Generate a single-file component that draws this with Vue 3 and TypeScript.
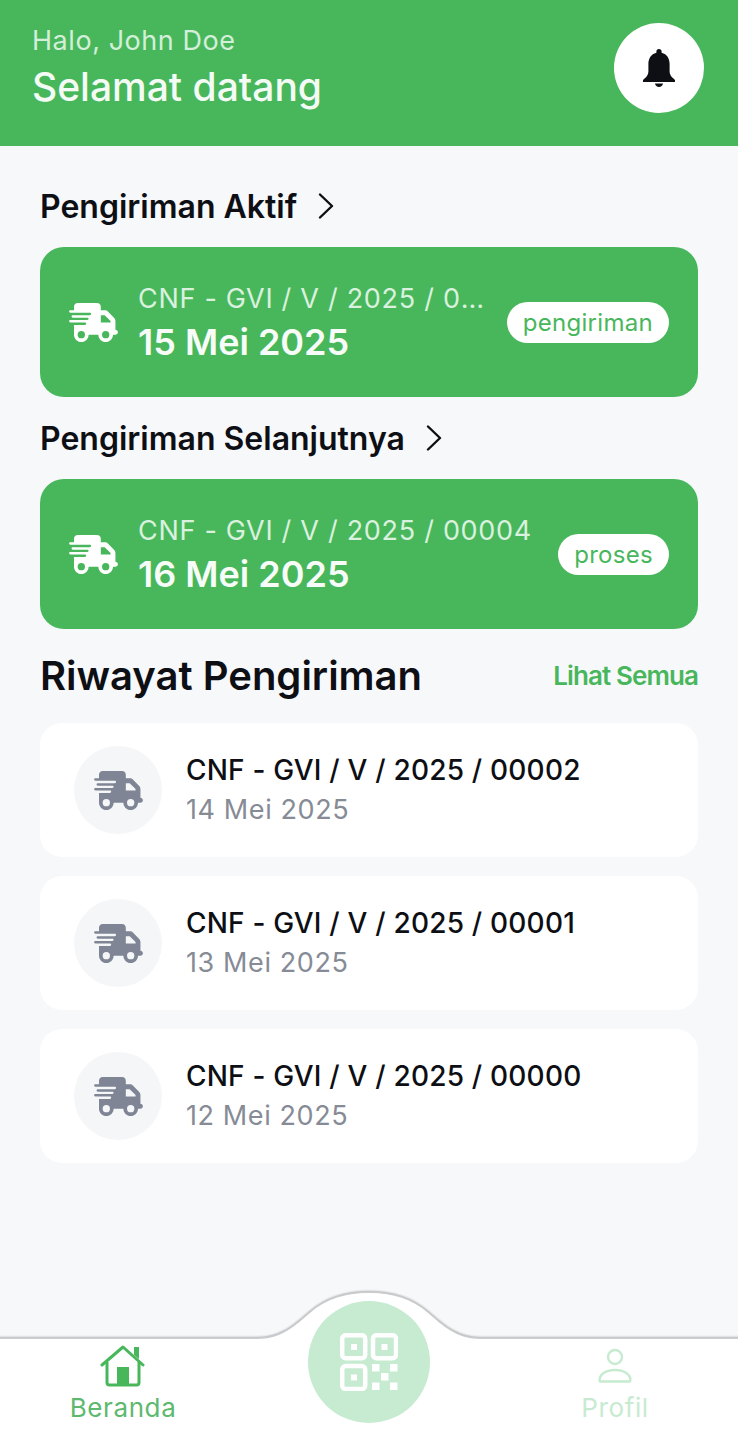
<script setup lang="ts">
interface Shipment {
  code: string;
  date: string;
  status?: string;
}

const TRUCK_PATH =
  "M112 0C85.5 0 64 21.5 64 48V96H16c-8.8 0-16 7.2-16 16s7.2 16 16 16H64 272c8.8 0 16 7.2 16 16s-7.2 16-16 16H64 48c-8.8 0-16 7.2-16 16s7.2 16 16 16H64 240c8.8 0 16 7.2 16 16s-7.2 16-16 16H64 16c-8.8 0-16 7.2-16 16s7.2 16 16 16H64 208c8.8 0 16 7.2 16 16s-7.2 16-16 16H64V416c0 53 43 96 96 96s96-43 96-96H384c0 53 43 96 96 96s96-43 96-96h32c17.7 0 32-14.3 32-32s-14.3-32-32-32V288 256 237.3c0-17-6.7-33.3-18.7-45.3L512 114.7c-12-12-28.3-18.7-45.3-18.7H416V48c0-26.5-21.5-48-48-48H112zM544 237.3V256H416V160h50.7L544 237.3zM160 368a48 48 0 1 1 0 96 48 48 0 1 1 0-96zm272 48a48 48 0 1 1 96 0 48 48 0 1 1-96 0z";

const BUMP_EDGE =
  "M-10 52H258C282 52 296 38 310 26C326 12 345 6 369 6C393 6 412 12 428 26C442 38 456 52 480 52H748";

const sections: { title: string; item: Shipment }[] = [
  {
    title: "Pengiriman Aktif",
    item: { code: "CNF - GVI / V / 2025 / 00005", date: "15 Mei 2025", status: "pengiriman" },
  },
  {
    title: "Pengiriman Selanjutnya",
    item: { code: "CNF - GVI / V / 2025 / 00004", date: "16 Mei 2025", status: "proses" },
  },
];

const history: Shipment[] = [
  { code: "CNF - GVI / V / 2025 / 00002", date: "14 Mei 2025" },
  { code: "CNF - GVI / V / 2025 / 00001", date: "13 Mei 2025" },
  { code: "CNF - GVI / V / 2025 / 00000", date: "12 Mei 2025" },
];
</script>

<template>
  <div class="page">
    <header class="header">
      <div class="greeting">
        <div class="hello">Halo, John Doe</div>
        <div class="welcome">Selamat datang</div>
      </div>
      <div class="bell">
        <svg width="32" height="38" viewBox="0 0 32 38">
          <path
            fill="#0d0f14"
            d="M16 0c-1.6 0-2.6 1-2.6 2.6v1.1C8 5 5.4 9.5 5.4 15v7.5c0 3-1.5 5-3.6 6.8L0 31v2h32v-2l-1.8-1.7c-2.1-1.8-3.6-3.8-3.6-6.8V15c0-5.5-2.6-10-8-11.3V2.600C18.600 1 17.600 0 16 0zM12 34.500h8c-.3 2-2 3.500-4 3.500s-3.700-1.500-4-3.500z"
          />
        </svg>
      </div>
    </header>

    <main class="content">
      <section v-for="s in sections" :key="s.title" class="active">
        <div class="section-title">
          <span>{{ s.title }}</span>
          <svg width="18" height="26" viewBox="0 0 18 26" fill="none">
            <path d="M3 1.5 15 13 3 24.5" stroke="#0d0f14" stroke-width="2.4" stroke-linecap="round" stroke-linejoin="round" />
          </svg>
        </div>
        <div class="card">
          <svg class="card-truck" width="49" height="39" viewBox="0 0 640 512">
            <path fill="#fff" :d="TRUCK_PATH" />
          </svg>
          <div class="card-text">
            <div class="card-code">{{ s.item.code }}</div>
            <div class="card-date">{{ s.item.date }}</div>
          </div>
          <span class="pill">{{ s.item.status }}</span>
        </div>
      </section>

      <div class="history-head">
        <h2>Riwayat Pengiriman</h2>
        <span class="see-all">Lihat Semua</span>
      </div>
      <div class="history">
        <div v-for="h in history" :key="h.code" class="row">
          <div class="row-icon">
            <svg width="49" height="39" viewBox="0 0 640 512">
              <path fill="#7f8595" :d="TRUCK_PATH" />
            </svg>
          </div>
          <div>
            <div class="row-code">{{ h.code }}</div>
            <div class="row-date">{{ h.date }}</div>
          </div>
        </div>
      </div>
    </main>

    <nav class="nav">
      <svg class="nav-bump" width="738" height="60" viewBox="0 0 738 60">
        <path :d="BUMP_EDGE + 'V60H-10Z'" fill="#fff" />
        <path :d="BUMP_EDGE" fill="none" stroke="#3c4048" stroke-opacity="0.07" stroke-width="5" />
        <path :d="BUMP_EDGE" fill="none" stroke="#3c4048" stroke-opacity="0.2" stroke-width="2.5" />
        <path :d="BUMP_EDGE + 'V60H-10Z'" fill="#fff" transform="translate(0 1)" />
      </svg>
      <div class="nav-item on">
        <svg width="46" height="42" viewBox="0 0 46 42" fill="none">
          <path d="M2 20 23 2l20 18" stroke="#48b75c" stroke-width="3" stroke-linecap="round" stroke-linejoin="round" />
          <path d="M7 17v20.5c0 1.6.9 2.5 2.5 2.500h27c1.600 0 2.500-.9 2.500-2.500V17" stroke="#48b75c" stroke-width="3" />
          <path d="M34 10V2h5v12z" fill="#48b75c" />
          <path d="M17 22h12v18H17z" fill="#48b75c" />
        </svg>
        <span>Beranda</span>
      </div>
      <div class="scan">
        <svg width="58" height="58" viewBox="0 0 58 58" fill="none">
          <g stroke="#fff" stroke-width="4.5">
            <rect x="2.2" y="2.2" width="23" height="23" rx="3.5" />
            <rect x="33" y="2.2" width="23" height="23" rx="3.5" />
            <rect x="2.2" y="33" width="23" height="23" rx="3.5" />
          </g>
          <g fill="#fff">
            <rect x="11" y="11" width="6" height="6" />
            <rect x="41.5" y="11" width="6" height="6" />
            <rect x="11" y="41.5" width="6" height="6" />
            <rect x="32" y="31" width="7.5" height="7.5" />
            <rect x="50" y="31" width="7.5" height="7.5" />
            <rect x="41" y="40" width="7.5" height="7.5" />
            <rect x="32" y="49.5" width="7.5" height="7.5" />
            <rect x="50" y="49.5" width="7.5" height="7.5" />
          </g>
        </svg>
      </div>
      <div class="nav-item off">
        <svg width="34" height="35" viewBox="0 0 34 35" fill="none">
          <circle cx="17" cy="8.5" r="7" stroke="#c6ebd0" stroke-width="2.4" />
          <path d="M2 33c-1-2 0-6 3-8 3-2.500 7-3.500 12-3.500s9 1 12 3.500c3 2 4 6 3 8z" stroke="#c6ebd0" stroke-width="2.400" stroke-linejoin="round" />
        </svg>
        <span>Profil</span>
      </div>
    </nav>
  </div>
</template>

<style>
html,
body {
  margin: 0;
  background: #f7f8fa;
}
</style>

<style scoped>
* {
  box-sizing: border-box;
}

.page {
  width: 738px;
  height: 1436px;
  display: flex;
  flex-direction: column;
  overflow: hidden;
  background: #f7f8fa;
  font-family: Inter, "Liberation Sans", sans-serif;
  color: #0d0f14;
}

.header {
  height: 146px;
  flex-shrink: 0;
  padding: 23px 34px 0 32px;
  display: flex;
  justify-content: space-between;
  align-items: flex-start;
  background: #48b75c;
}

.hello {
  margin-top: 1px;
  font-size: 27px;
  line-height: 34px;
  letter-spacing: 0.55px;
  color: #d3efd9;
}

.welcome {
  margin-top: 5px;
  font-size: 39px;
  line-height: 48px;
  font-weight: 500;
  color: #f4fbf5;
}

.bell {
  width: 90px;
  height: 90px;
  border-radius: 50%;
  background: #fff;
  display: flex;
  align-items: center;
  justify-content: center;
}

.content {
  flex: 1;
  padding: 41px 40px 0;
}

.active {
  margin-bottom: 22px;
}

.section-title {
  display: flex;
  align-items: center;
  gap: 20px;
  height: 38px;
  margin-bottom: 22px;
  font-size: 32px;
  font-weight: 600;
}

.card {
  height: 150px;
  padding: 0 29px;
  display: flex;
  align-items: center;
  border-radius: 24px;
  background: #48b75c;
}

.card-truck {
  flex-shrink: 0;
  margin-right: 20px;
}

.card-text {
  flex: 1;
  min-width: 0;
  margin-right: 22px;
}

.card-code {
  font-size: 27px;
  line-height: 36px;
  letter-spacing: 0.7px;
  color: #d9f1de;
  white-space: nowrap;
  overflow: hidden;
  text-overflow: ellipsis;
}

.card-date {
  margin-top: 3px;
  font-size: 36px;
  line-height: 44px;
  font-weight: 600;
  color: #f7fcf8;
}

.pill {
  flex-shrink: 0;
  height: 41px;
  padding: 0 16px;
  display: flex;
  align-items: center;
  border-radius: 21px;
  background: #fff;
  color: #48b75c;
  font-size: 24px;
  letter-spacing: 0.3px;
}

.history-head {
  display: flex;
  justify-content: space-between;
  align-items: center;
  height: 48px;
  margin-bottom: 24px;
}

.history-head h2 {
  margin: 0;
  font-size: 40px;
  font-weight: 600;
}

.see-all {
  font-size: 26px;
  font-weight: 600;
  letter-spacing: -0.9px;
  color: #48b75c;
}

.history {
  display: flex;
  flex-direction: column;
  gap: 19px;
}

.row {
  height: 134px;
  padding: 0 34px;
  display: flex;
  align-items: center;
  gap: 24px;
  border-radius: 22px;
  background: #fff;
}

.row-icon {
  width: 88px;
  height: 88px;
  flex-shrink: 0;
  display: flex;
  align-items: center;
  justify-content: center;
  border-radius: 50%;
  background: #f5f6f8;
}

.row-code {
  font-size: 28px;
  line-height: 36px;
  font-weight: 500;
  letter-spacing: 0.2px;
}

.row-date {
  margin-top: 4px;
  font-size: 27px;
  line-height: 36px;
  letter-spacing: 0.6px;
  color: #868b96;
}

.nav {
  position: relative;
  height: 98px;
  flex-shrink: 0;
  padding: 0 70px;
  display: flex;
  justify-content: space-between;
  background: #fff;
}

.nav-bump {
  position: absolute;
  left: 0;
  top: -52px;
  pointer-events: none;
}

.scan {
  position: absolute;
  left: 308px;
  top: -37px;
  width: 122px;
  height: 122px;
  display: flex;
  align-items: center;
  justify-content: center;
  border-radius: 50%;
  background: #c6ebd0;
}

.nav-item {
  position: relative;
  width: 106px;
  padding-top: 7px;
  display: flex;
  flex-direction: column;
  align-items: center;
  font-size: 26px;
  letter-spacing: 0.6px;
}

.nav-item svg {
  height: 42px;
}

.nav-item span {
  margin-top: 5px;
  line-height: 32px;
}

.nav-item.on {
  color: #5cb96e;
}

.nav-item.off {
  color: #c6ebd0;
}
</style>
